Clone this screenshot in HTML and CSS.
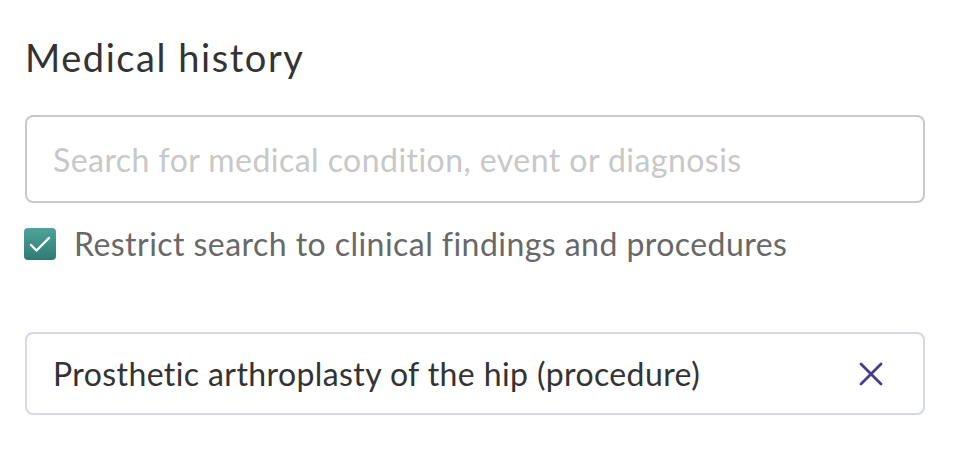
FILE: index.html
```html
<!DOCTYPE html>
<html lang="en">
<head>
    <meta charset="UTF-8">
    <meta name="viewport" content="width=device-width, initial-scale=1.0">
    <title>Medical history</title>
    <link rel="stylesheet" href="styles.css">
</head>
<body>
    <div class="section">
        <h2 class="section-title">Medical history</h2>
        <input type="text" class="search-input" placeholder="Search for medical condition, event or diagnosis">
        <label class="check-row">
            <span class="check-box">
                <svg viewBox="0 0 32 32" width="32" height="32">
                    <path d="M7 17l5.5 5.5L25 10" fill="none" stroke="#fff" stroke-width="2.4" stroke-linecap="round" stroke-linejoin="round"/>
                </svg>
            </span>
            <span class="check-label">Restrict search to clinical findings and procedures</span>
        </label>
        <div class="selected-item">
            <span class="selected-text">Prosthetic arthroplasty of the hip (procedure)</span>
            <button class="remove-btn" aria-label="Remove">
                <svg viewBox="0 0 24 24" width="24" height="24">
                    <path d="M2 2L22 22M22 2L2 22" fill="none" stroke="#4a3b8f" stroke-width="2.8" stroke-linecap="round"/>
                </svg>
            </button>
        </div>
    </div>
</body>
</html>
```

FILE: styles.css
```css
body {
    margin: 0;
    font-family: Lato, "Open Sans", sans-serif;
    background-color: #fff;
    color: #333;
}

.section {
    padding: 34px 29px 0 25px;
}

.section-title {
    margin: 0 0 35px;
    font-size: 38px;
    font-weight: 400;
    line-height: 46px;
    letter-spacing: 1.55px;
    color: #333;
}

.search-input {
    display: block;
    width: 100%;
    height: 88px;
    box-sizing: border-box;
    padding: 0 26px;
    border: 2px solid #c9c9c9;
    border-radius: 8px;
    font-family: inherit;
    font-size: 32px;
    letter-spacing: 0.45px;
    color: #333;
    outline: none;
}

.search-input::placeholder {
    color: #c8c8c8;
}

.check-row {
    display: flex;
    align-items: center;
    gap: 18px;
    margin: 25px 0 0 -1px;
    cursor: pointer;
}

.check-box {
    width: 32px;
    height: 32px;
    border-radius: 4px;
    background: linear-gradient(#4fa39b, #2e7b74);
    display: flex;
}

.check-label {
    font-size: 32px;
    line-height: 32px;
    letter-spacing: 0.45px;
    color: #686868;
}

.selected-item {
    display: flex;
    align-items: center;
    justify-content: space-between;
    height: 83px;
    box-sizing: border-box;
    margin-top: 72px;
    padding: 0 40px 0 26px;
    border: 2px solid #d6d9e4;
    border-radius: 8px;
}

.selected-text {
    font-size: 32px;
    letter-spacing: 0.4px;
    color: #333;
}

.remove-btn {
    padding: 0;
    border: none;
    background: none;
    display: flex;
    cursor: pointer;
}
```
